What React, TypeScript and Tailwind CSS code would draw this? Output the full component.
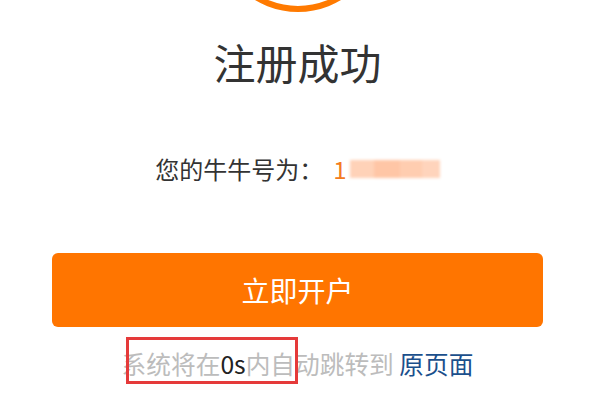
import React from "react";

export default function App() {
  return (
    <div
      className="w-[603px] h-[401px] overflow-hidden bg-white flex flex-col items-center pl-[52px] pr-[60px]"
      style={{ fontFamily: '"Noto Sans CJK SC", "Noto Sans", sans-serif' }}
    >
      <div className="w-[166px] h-[166px] rounded-full border-[6px] border-[#ff7a00] mt-[-154px] shrink-0" />
      <h1 className="mt-[29px] text-[42px] leading-none text-[#333333]">注册成功</h1>
      <div className="mt-[74px] flex items-center text-[24px] leading-none text-[#333333]">
        <span>您的牛牛号为：</span>
        <span className="ml-[10px] text-[#f47b20]">1</span>
        <div className="ml-[3px] flex h-[18px] blur-[1.5px]">
          <div className="w-[24px] bg-[#ffd2b8]" />
          <div className="w-[26px] bg-[#ffc6a6]" />
          <div className="w-[22px] bg-[#ffcdb0]" />
          <div className="w-[18px] bg-[#ffd4bc]" />
        </div>
      </div>
      <button className="mt-[72px] w-full h-[74px] rounded-[6px] bg-[#ff7500] text-white text-[28px] leading-none">
        立即开户
      </button>
      <div className="relative mt-[24px] text-[24.7px] leading-none whitespace-nowrap">
        <span className="text-[#bcbcbc]">系统将在</span>
        <span className="text-[#222222]">0s</span>
        <span className="text-[#bcbcbc]">内自动跳转到 </span>
        <span className="text-[#1b4f8c]">原页面</span>
        <div className="absolute left-[4px] top-[-14px] w-[172px] h-[47px] border-[3px] border-[#e53a3a]" />
      </div>
    </div>
  );
}
